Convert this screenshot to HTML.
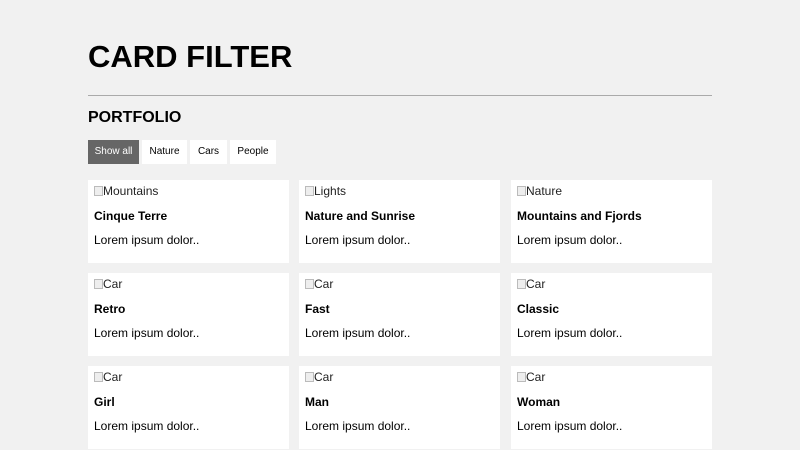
<!DOCTYPE html>
<html><head><style>
body{margin:0;background:#f1f1f1;font-family:"Liberation Sans",Arial,sans-serif;color:#000;}
.wrap{position:absolute;left:88px;width:624px;top:0;}
h1{position:absolute;top:38px;left:0;margin:0;font-size:31px;font-weight:bold;line-height:38px;}
hr{position:absolute;top:95px;left:0;width:624px;margin:0;border:0;border-top:1px solid #aaa;}
h2{position:absolute;top:108px;left:0;margin:0;font-size:16px;line-height:20px;}
.btn{position:absolute;top:140px;height:24px;line-height:24px;background:#fff;font-size:10px;text-align:center;}
.btn.a{background:#666;color:#fff;}
.card{position:absolute;width:201px;height:83px;background:#fff;}
.card .i{position:absolute;left:6px;top:4px;font-size:12px;color:#222;}
.card .i:before{content:"";display:inline-block;width:9px;height:10px;border:1px solid #bbb;vertical-align:-1px;background:#eee;box-sizing:border-box}
.card .t{position:absolute;left:6px;top:29px;font-size:12px;font-weight:bold;}
.card .p{position:absolute;left:6px;top:53px;font-size:12px;}
</style></head><body><div class="wrap">
<h1>CARD FILTER</h1><hr><h2>PORTFOLIO</h2>
<div class="btn a" style="left:0;width:51px">Show all</div>
<div class="btn" style="left:54px;width:45px">Nature</div>
<div class="btn" style="left:102px;width:37px">Cars</div>
<div class="btn" style="left:142px;width:46px">People</div>
<div class="card" style="left:0;top:180px"><div class="i">Mountains</div><div class="t">Cinque Terre</div><div class="p">Lorem ipsum dolor..</div></div>
<div class="card" style="left:211px;top:180px"><div class="i">Lights</div><div class="t">Nature and Sunrise</div><div class="p">Lorem ipsum dolor..</div></div>
<div class="card" style="left:423px;top:180px"><div class="i">Nature</div><div class="t">Mountains and Fjords</div><div class="p">Lorem ipsum dolor..</div></div>
<div class="card" style="left:0;top:273px"><div class="i">Car</div><div class="t">Retro</div><div class="p">Lorem ipsum dolor..</div></div>
<div class="card" style="left:211px;top:273px"><div class="i">Car</div><div class="t">Fast</div><div class="p">Lorem ipsum dolor..</div></div>
<div class="card" style="left:423px;top:273px"><div class="i">Car</div><div class="t">Classic</div><div class="p">Lorem ipsum dolor..</div></div>
<div class="card" style="left:0;top:366px"><div class="i">Car</div><div class="t">Girl</div><div class="p">Lorem ipsum dolor..</div></div>
<div class="card" style="left:211px;top:366px"><div class="i">Car</div><div class="t">Man</div><div class="p">Lorem ipsum dolor..</div></div>
<div class="card" style="left:423px;top:366px"><div class="i">Car</div><div class="t">Woman</div><div class="p">Lorem ipsum dolor..</div></div>
</div></body></html>
